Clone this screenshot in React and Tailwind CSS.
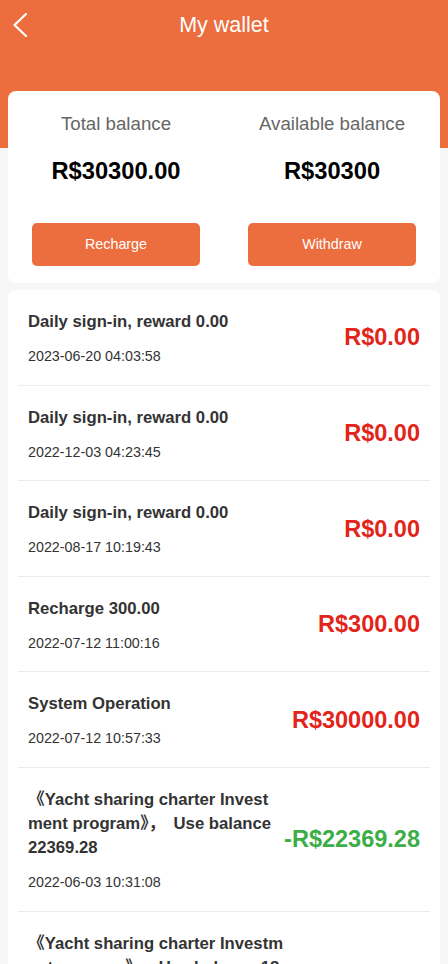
import React from "react";

const records = [
  { title: "Daily sign-in, reward 0.00", time: "2023-06-20 04:03:58", amount: "R$0.00", out: false },
  { title: "Daily sign-in, reward 0.00", time: "2022-12-03 04:23:45", amount: "R$0.00", out: false },
  { title: "Daily sign-in, reward 0.00", time: "2022-08-17 10:19:43", amount: "R$0.00", out: false },
  { title: "Recharge 300.00", time: "2022-07-12 11:00:16", amount: "R$300.00", out: false },
  { title: "System Operation", time: "2022-07-12 10:57:33", amount: "R$30000.00", out: false },
  {
    title: "《Yacht sharing charter Investment program》，\u2002Use balance 22369.28",
    time: "2022-06-03 10:31:08",
    amount: "-R$22369.28",
    out: true,
  },
  {
    title: "《Yacht sharing charter Investment program》，\u2002Use balance 180.00",
    time: "2022-06-03 10:29:41",
    amount: "-R$180.00",
    out: true,
  },
];

const App = () => {
  return (
    <div className="min-h-screen bg-[linear-gradient(#ec6d3e_148px,#f7f7f7_148px)] font-['Liberation_Sans','Noto_Sans_CJK_SC',sans-serif]">
      {/* Top bar */}
      <div className="grid grid-cols-[48px_1fr_48px] items-center h-[50px]">
        <div className="pl-3">
          <svg width="16" height="24" viewBox="0 0 16 24" fill="none">
            <path d="M14 1 L2.5 12 L14 23" stroke="#fff" strokeWidth="2.2" strokeLinecap="round" strokeLinejoin="round" />
          </svg>
        </div>
        <h1 className="text-center text-white text-[21.5px] leading-[50px]">My wallet</h1>
        <div />
      </div>

      {/* Balance card */}
      <div className="mx-2 mt-[41px] bg-white rounded-lg pt-[21px] pb-[17px]">
        <div className="grid grid-cols-2">
          <div className="flex flex-col items-center">
            <p className="text-[18.7px] leading-[24px] text-[#666]">Total balance</p>
            <p className="mt-[21px] text-[23.7px] leading-[28px] font-bold text-black">R$30300.00</p>
            <button className="mt-[38px] w-[168px] h-[43px] rounded-[5px] bg-[#ec6d3e] text-white text-[14.3px]">
              Recharge
            </button>
          </div>
          <div className="flex flex-col items-center">
            <p className="text-[18.7px] leading-[24px] text-[#666]">Available balance</p>
            <p className="mt-[21px] text-[23.7px] leading-[28px] font-bold text-black">R$30300</p>
            <button className="mt-[38px] w-[168px] h-[43px] rounded-[5px] bg-[#ec6d3e] text-white text-[14.3px]">
              Withdraw
            </button>
          </div>
        </div>
      </div>

      {/* Records */}
      <div className="mx-2 mt-[7px] bg-white rounded-lg px-[10px]">
        {records.map((r, i) => (
          <div key={i} className="flex items-center border-b border-[#ececec] pl-[10px] pr-[10px] pt-5 pb-[18.6px]">
            <div className="w-2/3 min-w-0">
              <p className="text-[16.7px] leading-[24px] font-bold text-[#333] break-all">{r.title}</p>
              <p className="mt-3 text-[14.3px] leading-[20px] text-[#333]">{r.time}</p>
            </div>
            <div
              className={`flex-1 pl-[10px] text-right whitespace-nowrap font-bold text-[23.5px] ${
                r.out ? "text-[#3cae48]" : "text-[#e3241b]"
              }`}
            >
              {r.amount}
            </div>
          </div>
        ))}
      </div>
    </div>
  );
};

export default App;
